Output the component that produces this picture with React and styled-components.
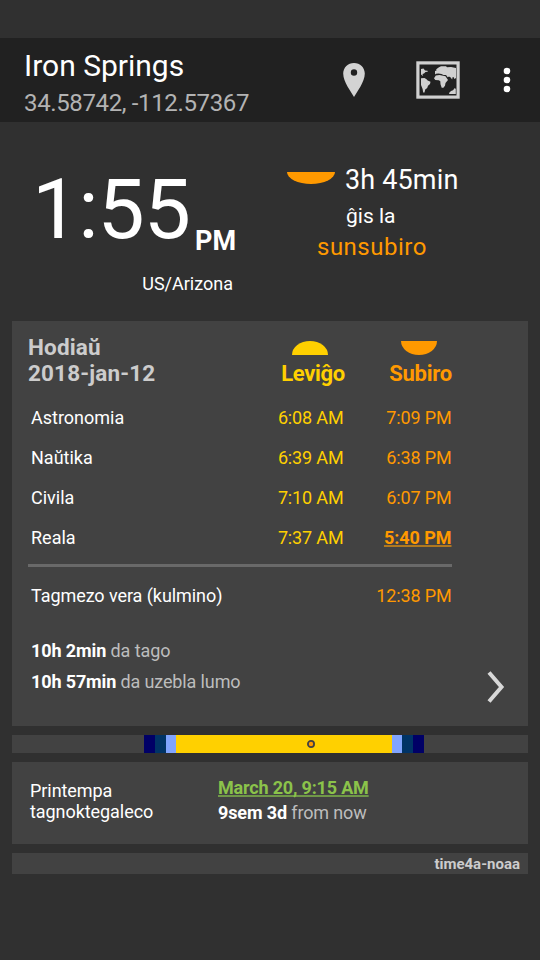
import React from "react";
import styled, { createGlobalStyle } from "styled-components";

const GlobalStyle = createGlobalStyle`
  * { box-sizing: border-box; }
  html, body { margin: 0; padding: 0; background: #303030; }
  svg { display: block; flex: none; }
`;

const Screen = styled.div`
  display: flex;
  flex-direction: column;
  width: 540px;
  height: 960px;
  overflow: hidden;
  padding-top: 38px;
  background: #303030;
  color: #fff;
  font-family: Roboto, "Liberation Sans", sans-serif;
  font-size: 18px;
  white-space: nowrap;
`;

const Text = styled.div`
  font-size: ${(p) => p.$size || 18}px;
  line-height: ${(p) => p.$line || 26}px;
  font-weight: ${(p) => (p.$bold ? 700 : 400)};
  letter-spacing: ${(p) => p.$track || 0}px;
  color: ${(p) => p.$color || "#fff"};
`;

const Toolbar = styled.header`
  display: flex;
  height: 84px;
  flex: none;
  background: #212121;
`;

const TitleBlock = styled.div`
  display: flex;
  flex-direction: column;
  gap: 6px;
  width: 343px;
  padding: 10px 0 0 24px;
`;

const Actions = styled.div`
  display: flex;
  align-items: flex-start;
`;

const PinIcon = styled.svg`
  margin-top: 25px;
`;

const MapIcon = styled.svg`
  margin: 23px 0 0 51px;
`;

const MenuIcon = styled.svg`
  margin: 29px 0 0 43px;
`;

const Hero = styled.section`
  display: flex;
  height: 199px;
  flex: none;
`;

const ClockColumn = styled.div`
  width: 284px;
  padding: 37px 0 0 32px;
`;

const ClockRow = styled.div`
  display: flex;
  height: 112px;
`;

const Meridiem = styled(Text)`
  margin: 69px 0 0 5px;
`;

const Zone = styled(Text)`
  width: 201px;
  text-align: right;
`;

const Countdown = styled.div`
  padding-top: 42px;
`;

const CountdownRow = styled.div`
  display: flex;
  gap: 9px;
  padding-left: 3px;
`;

const CountdownIcon = styled.svg`
  margin-top: 8px;
`;

const CountdownNote = styled(Text)`
  padding-left: 62px;
  margin-top: 7px;
`;

const CountdownEvent = styled(Text)`
  padding-left: 33px;
  margin-top: 2px;
`;

const Card = styled.section`
  flex: none;
  margin: 0 12px 9px;
  background: #424242;
`;

const DayCard = styled(Card)`
  height: 405px;
  padding: 13px 16px 0;
`;

const CardHead = styled.div`
  display: flex;
  height: 64px;
`;

const DateBlock = styled.div`
  width: 252px;
`;

const HeadColumn = styled.div`
  display: flex;
  flex-direction: column;
  align-items: center;
  gap: 6px;
  width: ${(p) => p.$width}px;
  padding-top: 7px;
`;

const SunIcon = styled.svg`
  margin-right: ${(p) => p.$shift}px;
`;

const TimeRow = styled.div`
  display: grid;
  grid-template-columns: 203.500px 109px 108px;
  width: 424px;
  height: ${(p) => p.$height || 40}px;
  align-items: center;
  padding-left: 3px;
`;

const TimeCell = styled(Text)`
  text-align: right;
`;

const NextTime = styled.span`
  text-decoration: underline;
  text-decoration-color: ${(p) => p.$line};
  text-decoration-thickness: 2px;
  text-underline-offset: 1px;
  text-decoration-skip-ink: none;
`;

const Divider = styled.div`
  width: 424px;
  height: 3px;
  margin-top: 6px;
  background: #696969;
`;

const DayFooter = styled.div`
  display: flex;
  justify-content: space-between;
  padding: 11px 7px 0 3px;
`;

const Muted = styled.span`
  font-weight: 400;
  color: #bdbdbd;
`;

const Chevron = styled.svg`
  margin-top: 36px;
`;

const DayBar = styled(Card)`
  display: flex;
  height: 18px;
  padding-left: 132px;
`;

const Segment = styled.div`
  width: ${(p) => p.$width}px;
  background: ${(p) => p.$color};
`;

const DaySegment = styled(Segment)`
  padding: 5px 0 0 131px;
`;

const SeasonCard = styled(Card)`
  display: flex;
  height: 82px;
  padding-left: 18px;
`;

const SeasonName = styled.div`
  width: 188px;
  padding-top: 18px;
`;

const SeasonTime = styled.div`
  padding-top: 13px;
`;

const SourceBar = styled(Card)`
  height: 21px;
  padding: 1px 8px 0 0;
  text-align: right;
`;

const RISE = "#ffd000";
const SET = "#ff9900";

const TIMES = [
  { name: "Astronomia", rise: "6:08 AM", set: "7:09 PM" },
  { name: "Naŭtika", rise: "6:39 AM", set: "6:38 PM" },
  { name: "Civila", rise: "7:10 AM", set: "6:07 PM" },
  { name: "Reala", rise: "7:37 AM", set: "5:40 PM", next: true },
];

export default function App() {
  return (
    <Screen>
      <GlobalStyle />
      <Toolbar>
        <TitleBlock>
          <Text $size={30} $line={36}>Iron Springs</Text>
          <Text $size={24} $track={-0.36} $color="#b3b3b3">34.58742, -112.57367</Text>
        </TitleBlock>
        <Actions>
          <PinIcon width="22" height="34" viewBox="0 0 22 34">
            <path
              d="M11 0C4.900 0 .200 4.600.200 10.600c0 4.200 2 8.700 4.300 13L11 34l6.500-10.400c2.300-4.300 4.300-8.800 4.300-13C21.800 4.600 17.100 0 11 0Zm0 6.300a3.200 3.200 0 1 1 0 6.400 3.200 3.200 0 0 1 0-6.400Z"
              fill="#d3d3d3"
            />
          </PinIcon>
          <MapIcon width="44" height="38" viewBox="0 0 44 38">
            <rect x="1.900" y="1.900" width="40.200" height="34.200" fill="none" stroke="#d0d0d0" strokeWidth="3.200" />
            <g fill="#d0d0d0">
              <path d="M5 8 7.500 7.500 9 9.500l2.500.3.300 1L9.500 11 8 12.500l-1.500.5L7 15 5 13.500Z" />
              <path d="M5 17.200 8.500 17l2 1.200 1.200 1.300 2.800 1.300-.5 2.200-2 1.800-.8 2.200-2 1.500-.7 3h-1.300l-.6-3.500L5 24Z" />
              <path d="M19 11.500V10l1.500-.5-.3-1.300L23 6.200 25 5.300h5l1 1 4-.3 5 1v10l-1.600 1-.7-1.700-1-.3-.6 2.500-1.400-2-1.700-1-1.300.8-1.700-2.300h-2.500l-2-1-3-.5-2.500.3-1 .7Z" />
              <path d="M18 17.200l1.800-2.700 3.700-.6 6 1.400 2.500 3.700-2.500 3-.5 2.700-1.600 2.100h-1.700l-1.200-3.600-.2-3-1.500-1-3.500-.2Z" />
              <path d="M33 32l2-2 2-.8 1.800-2.300 1 1V33h-6.500Z" />
            </g>
          </MapIcon>
          <MenuIcon width="8" height="26" viewBox="0 0 8 26" fill="#fff">
            <circle cx="4" cy="4" r="3.300" />
            <circle cx="4" cy="13" r="3.300" />
            <circle cx="4" cy="22" r="3.300" />
          </MenuIcon>
        </Actions>
      </Toolbar>

      <Hero>
        <ClockColumn>
          <ClockRow>
            <Text $size={84} $line={101} $track={-1}>1:55</Text>
            <Meridiem $size={27} $bold>PM</Meridiem>
          </ClockRow>
          <Zone>US/Arizona</Zone>
        </ClockColumn>
        <Countdown>
          <CountdownRow>
            <CountdownIcon width="49" height="12" viewBox="0 0 49 12">
              <path d="M0 0h48a24 12 0 0 1-48 0Z" fill={SET} />
            </CountdownIcon>
            <Text $size={27} $line={32} $track={0.15}>3h 45min</Text>
          </CountdownRow>
          <CountdownNote $size={21}>ĝis la</CountdownNote>
          <CountdownEvent $size={24} $line={32} $color={SET} $track={0.5}>sunsubiro</CountdownEvent>
        </Countdown>
      </Hero>

      <DayCard>
        <CardHead>
          <DateBlock>
            <Text $size={22.5} $bold $track={0.15} $color="#ccc">Hodiaŭ</Text>
            <Text $size={22.5} $bold $track={0.15} $color="#ccc">2018-jan-12</Text>
          </DateBlock>
          <HeadColumn $width={66}>
            <SunIcon $shift={6} width="36" height="14" viewBox="0 0 36 14">
              <path d="M0 14a18 14 0 0 1 36 0Z" fill={RISE} />
            </SunIcon>
            <Text $size={22} $bold $track={-0.35} $color={RISE}>Leviĝo</Text>
          </HeadColumn>
          <HeadColumn $width={149}>
            <SunIcon $shift={3} width="36" height="14" viewBox="0 0 36 14">
              <path d="M0 0h36a18 14 0 0 1-36 0Z" fill={SET} />
            </SunIcon>
            <Text $size={22} $bold $track={-0.25} $color={SET}>Subiro</Text>
          </HeadColumn>
        </CardHead>
        {TIMES.map((t) => (
          <TimeRow key={t.name}>
            <Text>{t.name}</Text>
            <TimeCell $color={RISE} $track={-0.15}>{t.rise}</TimeCell>
            <TimeCell $color={SET} $bold={t.next} $track={t.next ? -0.05 : -0.15}>
              {t.next ? <NextTime $line="#b07820">{t.set}</NextTime> : t.set}
            </TimeCell>
          </TimeRow>
        ))}
        <Divider />
        <TimeRow $height={57}>
          <Text $track={-0.07}>Tagmezo vera (kulmino)</Text>
          <span />
          <TimeCell $color={SET} $track={-0.15}>12:38 PM</TimeCell>
        </TimeRow>
        <DayFooter>
          <div>
            <Text $line={31} $bold $track={-0.1}>10h 2min <Muted>da tago</Muted></Text>
            <Text $line={31} $bold $track={-0.13}>10h 57min <Muted>da uzebla lumo</Muted></Text>
          </div>
          <Chevron width="18" height="32" viewBox="0 0 18 32">
            <path d="M2 1.500 14.500 16 2 30.500" fill="none" stroke="#d8d8d8" strokeWidth="4" />
          </Chevron>
        </DayFooter>
      </DayCard>

      <DayBar>
        <Segment $width={11} $color="#000066" />
        <Segment $width={11} $color="#003366" />
        <Segment $width={10} $color="#80a4ff" />
        <DaySegment $width={216} $color={RISE}>
          <svg width="8" height="8" viewBox="0 0 8 8">
            <circle cx="4" cy="4" r="3.100" fill="#ff9900" stroke="#424242" strokeWidth="1.800" />
          </svg>
        </DaySegment>
        <Segment $width={10} $color="#80a4ff" />
        <Segment $width={11} $color="#003366" />
        <Segment $width={11} $color="#000066" />
      </DayBar>

      <SeasonCard>
        <SeasonName>
          <Text $line={21} $track={-0.06}>Printempa</Text>
          <Text $line={21} $track={-0.06}>tagnoktegaleco</Text>
        </SeasonName>
        <SeasonTime>
          <Text $line={25} $bold $track={-0.18} $color="#8bc34a"><NextTime $line="#709848">March 20, 9:15 AM</NextTime></Text>
          <Text $line={25} $bold $track={-0.13}>9sem 3d <Muted>from now</Muted></Text>
        </SeasonTime>
      </SeasonCard>

      <SourceBar>
        <Text $size={15} $line={20} $bold $color="#ccc">time4a-noaa</Text>
      </SourceBar>
    </Screen>
  );
}
